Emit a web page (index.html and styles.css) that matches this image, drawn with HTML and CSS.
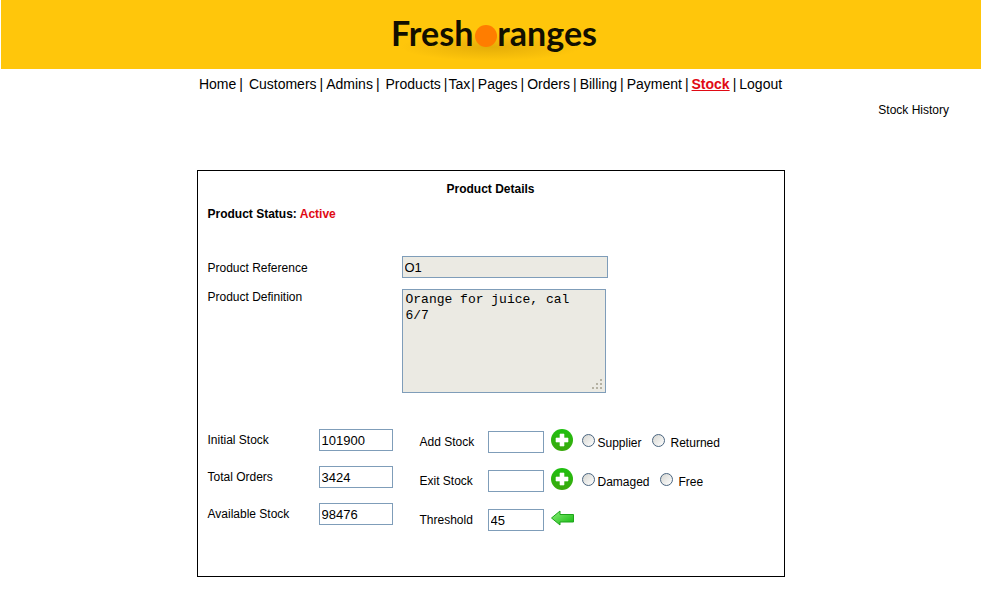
FILE: index.html
```html
<!DOCTYPE html>
<html lang="en">
<head>
    <meta charset="utf-8">
    <title>Freshoranges - Stock</title>
    <link rel="stylesheet" href="styles.css">
</head>
<body>
    <div class="header">
        <div class="logo">Fresh<span class="orange"></span>ranges</div>
    </div>

    <div class="menu">
        <a href="#">Home</a>|
        <a class="wide" href="#">Customers</a>|
        <a href="#">Admins</a>|
        <a class="wide" href="#">Products</a>|
        <a class="tight" href="#">Tax</a>|
        <a href="#">Pages</a>|
        <a href="#">Orders</a>|
        <a href="#">Billing</a>|
        <a href="#">Payment</a>|
        <a class="active" href="#">Stock</a>|
        <a href="#">Logout</a>
    </div>

    <div class="submenu"><a href="#">Stock History</a></div>

    <form class="panel">
        <h2>Product Details</h2>
        <p class="status">Product Status: <span>Active</span></p>

        <div class="product">
            <label for="reference">Product Reference</label>
            <input type="text" id="reference" value="O1" readonly>
            <label for="definition">Product Definition</label>
            <div class="definition">
                <textarea id="definition" readonly>Orange for juice, cal 6/7</textarea>
                <svg class="grip" width="12" height="12" viewBox="0 0 12 12" fill="#b5b2a3">
                    <path d="M9 1h2v2h-2zM5 5h2v2h-2zM9 5h2v2h-2zM1 9h2v2h-2zM5 9h2v2h-2zM9 9h2v2h-2z"/>
                </svg>
            </div>
        </div>

        <div class="stock">
            <div class="totals">
                <label for="initial">Initial Stock</label>
                <input type="text" id="initial" value="101900">
                <label for="orders">Total Orders</label>
                <input type="text" id="orders" value="3424">
                <label for="available">Available Stock</label>
                <input type="text" id="available" value="98476">
            </div>

            <div class="moves">
                <label for="add">Add Stock</label>
                <input type="text" id="add">
                <button type="button" aria-label="Add">
                    <svg width="22" height="22" viewBox="0 0 22 22">
                        <defs>
                            <linearGradient id="green" x1="0" y1="0" x2="0" y2="1">
                                <stop offset="0" stop-color="#1fc010"/>
                                <stop offset="1" stop-color="#3aa80c"/>
                            </linearGradient>
                        </defs>
                        <circle cx="11" cy="11" r="11" fill="url(#green)"/>
                        <path d="M9 5h4v4h4v4h-4v4h-4v-4h-4v-4h4z" fill="#fff" stroke="#fff" stroke-width="0.6" stroke-linejoin="round"/>
                    </svg>
                </button>
                <div class="choices">
                    <input type="radio" name="add_type" id="supplier"><label for="supplier">Supplier</label>
                    <input type="radio" name="add_type" id="returned"><label class="far" for="returned">Returned</label>
                </div>

                <label for="exit">Exit Stock</label>
                <input type="text" id="exit">
                <button type="button" aria-label="Exit">
                    <svg width="22" height="22" viewBox="0 0 22 22">
                        <circle cx="11" cy="11" r="11" fill="url(#green)"/>
                        <path d="M9 5h4v4h4v4h-4v4h-4v-4h-4v-4h4z" fill="#fff" stroke="#fff" stroke-width="0.6" stroke-linejoin="round"/>
                    </svg>
                </button>
                <div class="choices">
                    <input type="radio" name="exit_type" id="damaged"><label for="damaged">Damaged</label>
                    <input type="radio" name="exit_type" id="free"><label class="far" for="free">Free</label>
                </div>

                <label for="threshold">Threshold</label>
                <input type="text" id="threshold" value="45">
                <button type="button" aria-label="Set threshold">
                    <svg width="24" height="16" viewBox="0 0 24 16">
                        <defs>
                            <linearGradient id="arrow" x1="0" y1="0" x2="1" y2="1">
                                <stop offset="0" stop-color="#8fef7c"/>
                                <stop offset="1" stop-color="#10b80c"/>
                            </linearGradient>
                        </defs>
                        <path d="M0.500 8L9 1V4.500H22.500V12L9 12V15z" fill="url(#arrow)" stroke="#1da51a" stroke-linejoin="round"/>
                    </svg>
                </button>
            </div>
        </div>
    </form>
</body>
</html>
```
FILE: styles.css
```css
* { box-sizing: border-box; }
body { margin: 0; background: #fff; color: #000; font-family: Arial, "Liberation Sans", sans-serif; font-size: 12px; line-height: 16px; }
a { color: inherit; text-decoration: none; }

.header { height: 69px; margin-left: 1px; background: #ffc60b; display: flex; justify-content: center; }
.logo { display: flex; align-items: center; padding: 0 0 4px 6px; height: 69px; font-family: Lato, sans-serif; font-weight: bold; font-size: 34px; color: #120f00; background: radial-gradient(ellipse 90px 14px at 50% 47px, rgba(150, 100, 0, 0.25), transparent); }
.orange { width: 22px; height: 22px; margin: 6px 0 0 2px; border-radius: 50%; background: #ff7d00; }

.menu { display: flex; justify-content: center; gap: 3px; padding-top: 7px; font-size: 14px; }
.menu .wide { margin-left: 3px; }
.menu .tight { margin: 0 -2px; }
.menu .active { color: #e00a14; font-weight: bold; text-decoration: underline; }
.submenu { padding: 10px 32px 0 0; text-align: right; }

.panel { max-width: 588px; min-height: 407px; margin: 52px auto 20px; padding: 10px; border: 1px solid #000; }
.panel h2 { margin: 0 0 9px; font-size: 12px; text-align: center; }
.status { margin: 0; font-weight: bold; }
.status span { color: #e00a14; }

input[type="text"] { width: 100%; height: 22px; padding: 0 2px; border: 1px solid #7f9db9; background: #fff; color: #000; font: 13px Arial, "Liberation Sans", sans-serif; }
.product { display: grid; grid-template-columns: 194px 206px; row-gap: 11px; margin-top: 34px; }
.product label { padding-top: 4px; }
.product label[for="definition"] { padding-top: 0; }
.product input[type="text"], textarea { background: #ebeae3; }
.definition { position: relative; width: 204px; height: 104px; }
textarea { display: block; width: 100%; height: 100%; padding: 2px 20px 2px 3px; border: 1px solid #7f9db9; color: #000; resize: none; font: 13px/16px "Courier New", "Liberation Mono", monospace; }
.grip { position: absolute; right: 3px; bottom: 3px; }

.stock { display: flex; gap: 27px; margin-top: 36px; }
.totals, .moves { display: grid; align-items: center; align-content: start; }
.totals { grid-template-columns: 111px 74px; row-gap: 15px; }
.moves { grid-template-columns: 68px 56px 31px 1fr; grid-auto-rows: 22px; row-gap: 17px; padding-top: 2px; }
button { display: flex; margin: 0 0 4px 7px; padding: 0; border: none; background: none; cursor: pointer; }
button svg { flex-shrink: 0; }
.choices { display: flex; align-items: center; margin-left: 7px; }
input[type="radio"] { appearance: none; width: 13px; height: 13px; margin: 0 3px 3px 0; border: 1px solid #4a6580; border-radius: 50%; background: linear-gradient(135deg, #d5d5d0, #fff); }
input[type="radio"]:checked { background: radial-gradient(#21a121 35%, #fff 40%); }
.choices label { margin: 1px 10px 0 0; }
.choices .far { margin-left: 3px; }
```
